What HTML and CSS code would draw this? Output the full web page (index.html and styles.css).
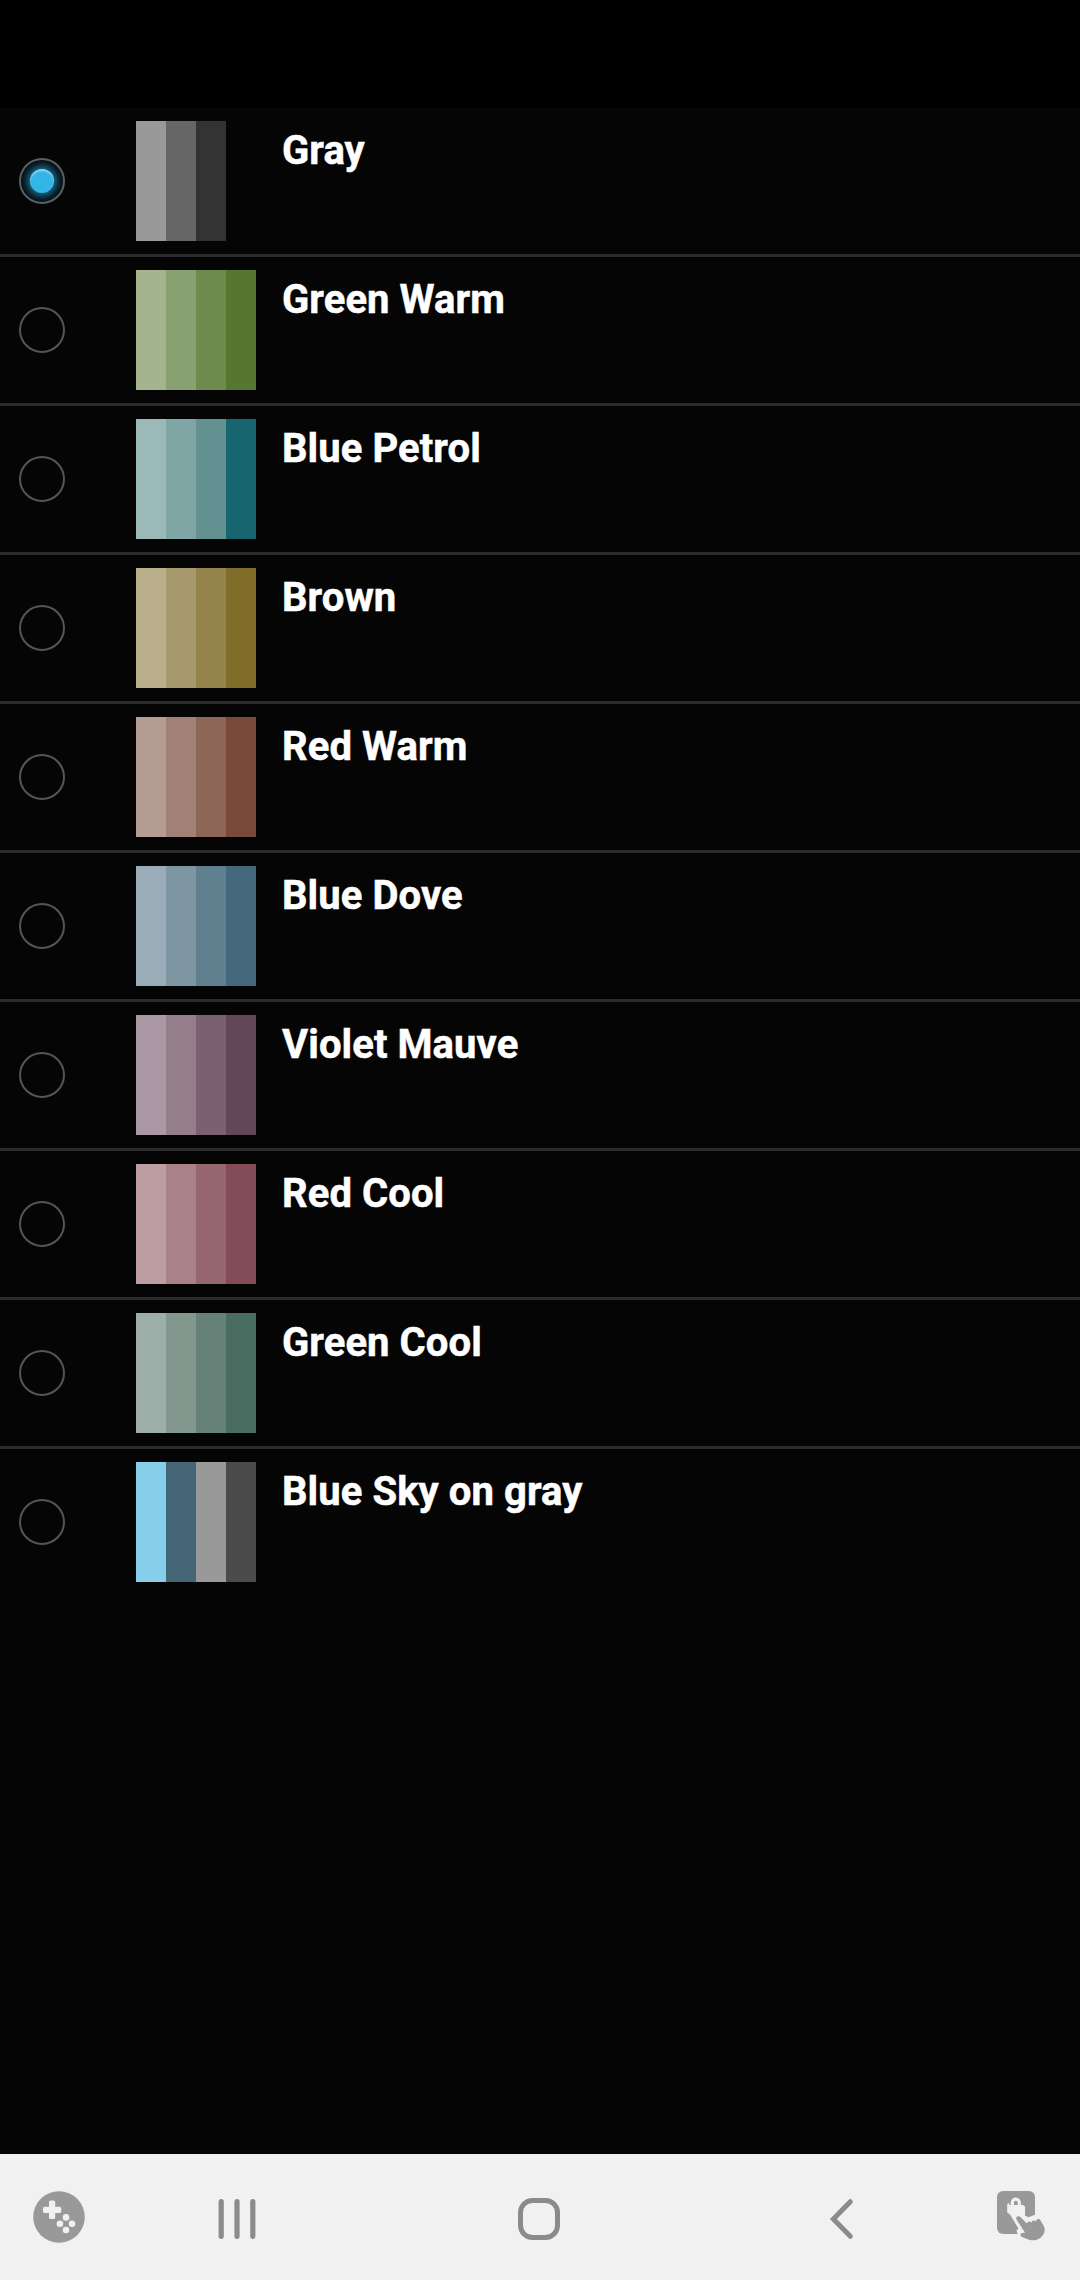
FILE: index.html
```
<!DOCTYPE html>
<html lang="en">
<head>
<meta charset="utf-8">
<title>Color theme</title>
<link rel="stylesheet" href="styles.css">
</head>
<body>
<div class="screen">
  <div class="status-bar"></div>
  <main class="theme-list">
    <div class="row"><span class="radio checked"></span><div class="swatch"><i style="background:#999999"></i><i style="background:#666666"></i><i style="background:#333333"></i></div><span class="name">Gray</span></div>
    <div class="row"><span class="radio"></span><div class="swatch"><i style="background:#a3b48f"></i><i style="background:#89a071"></i><i style="background:#6e8b4e"></i><i style="background:#557730"></i></div><span class="name">Green Warm</span></div>
    <div class="row"><span class="radio"></span><div class="swatch"><i style="background:#9bb9b8"></i><i style="background:#7fa5a4"></i><i style="background:#639191"></i><i style="background:#17656f"></i></div><span class="name">Blue Petrol</span></div>
    <div class="row"><span class="radio"></span><div class="swatch"><i style="background:#b9af8b"></i><i style="background:#a6996c"></i><i style="background:#94834a"></i><i style="background:#806d2a"></i></div><span class="name">Brown</span></div>
    <div class="row"><span class="radio"></span><div class="swatch"><i style="background:#b59c92"></i><i style="background:#a18176"></i><i style="background:#8c6557"></i><i style="background:#784a39"></i></div><span class="name">Red Warm</span></div>
    <div class="row"><span class="radio"></span><div class="swatch"><i style="background:#9aacb7"></i><i style="background:#7e95a2"></i><i style="background:#607f8f"></i><i style="background:#44697c"></i></div><span class="name">Blue Dove</span></div>
    <div class="row"><span class="radio"></span><div class="swatch"><i style="background:#aa99a5"></i><i style="background:#937e8a"></i><i style="background:#7b6070"></i><i style="background:#634658"></i></div><span class="name">Violet Mauve</span></div>
    <div class="row"><span class="radio"></span><div class="swatch"><i style="background:#bc9da2"></i><i style="background:#a98187"></i><i style="background:#96666f"></i><i style="background:#834c57"></i></div><span class="name">Red Cool</span></div>
    <div class="row"><span class="radio"></span><div class="swatch"><i style="background:#9caea7"></i><i style="background:#82988f"></i><i style="background:#668278"></i><i style="background:#496d60"></i></div><span class="name">Green Cool</span></div>
    <div class="row"><span class="radio"></span><div class="swatch"><i style="background:#87ceeb"></i><i style="background:#446677"></i><i style="background:#999999"></i><i style="background:#4b4b4b"></i></div><span class="name">Blue Sky on gray</span></div>
  </main>
  <nav class="nav-bar">
    <svg width="52" height="52" viewBox="33 37 52 52">
      <circle cx="59" cy="63" r="25.8" fill="#999"/>
      <g fill="#f1f1f1">
        <rect x="43" y="52.7" width="18.2" height="6.2" rx="1.6"/>
        <rect x="49" y="46.6" width="6.2" height="18.4" rx="1.6"/>
        <circle cx="66" cy="63.4" r="3.3"/><circle cx="59.9" cy="69.7" r="3.3"/>
        <circle cx="72" cy="69.7" r="3.3"/><circle cx="66" cy="76" r="3.3"/>
      </g>
    </svg>
    <svg width="38" height="52" viewBox="218 37 38 52" stroke="#8b8b8b" stroke-width="5.2" stroke-linecap="round">
      <path d="M221.2 47.7v34.6M237 47.7v34.6M252.8 47.7v34.6"/>
    </svg>
    <svg width="42" height="52" viewBox="518 37 42 52" fill="none" stroke="#8b8b8b" stroke-width="5">
      <rect x="520.5" y="46.5" width="37" height="37" rx="12"/>
    </svg>
    <svg width="26" height="52" viewBox="829 37 26 52" fill="none" stroke="#8b8b8b" stroke-width="5" stroke-linecap="round">
      <path d="M850.3 47.7 833.4 65l16.9 17.3"/>
    </svg>
    <svg width="50" height="54" viewBox="996 36 50 54">
      <rect x="997" y="37" width="38" height="43" rx="6" fill="#999"/>
      <path d="M1012.300 53v-4.300a3.500 3.500 0 0 1 7 0V53" fill="none" stroke="#f1f1f1" stroke-width="3.200"/>
      <path d="M1009.200 51h13.300q2.500 0 2.500 2.500v8l3.500 1.800 7-2.800h3v23h-22l1-4-1-3 2-2-8.500-14-2.800-2v-8q0-1.500 2-1.500z" fill="#f1f1f1"/>
      <path d="M1016.300 65.200c-.8-2.600 2.500-4 4.300-1.900l6 6 .9-.9c1.400-1.400 3-.9 4.100.4.200-2.500 2.900-2.900 4.400-1.100 0-3 3.500-3.500 4.500-1.200l3.500 6c2.500 5.500-2 12-8 13.400-3.500.8-6 .2-9-1l-5.500-2.200c-1.600-.8-1.200-3.400.8-3.600l2.800-.3z" fill="#999"/>
    </svg>
  </nav>
</div>
</body>
</html>
```
FILE: styles.css
```
body {
  margin: 0;
  background: #000;
  font-family: Roboto, "Liberation Sans", sans-serif;
}

.screen {
  display: flex;
  flex-direction: column;
  height: 2280px;
}

.status-bar {
  height: 108px;
  background: #000;
}

.theme-list {
  flex: 1;
  background: #050505;
}

.row {
  display: grid;
  grid-template-columns: 117px 146px 1fr;
  height: 120px;
  padding: 13px 0 13px 19px;
}

.row + .row {
  border-top: 3px solid #2b2b2b;
}

.radio {
  box-sizing: border-box;
  width: 46px;
  height: 46px;
  align-self: center;
  border: 2px solid #555;
  border-radius: 50%;
}

.radio.checked {
  display: grid;
  place-items: center;
  border-color: #5c5f61;
  background: radial-gradient(circle closest-side, #1b6c8c 50%, #12475c 66%, #09222d 84%, #060d11 100%);
}

.radio.checked::before {
  content: "";
  width: 24px;
  height: 24px;
  border-radius: 50%;
  background: #33b5e5;
  box-shadow: inset 0 2px 2px #8bd5f0;
}

.swatch {
  display: flex;
}

.swatch i {
  width: 30px;
}

.name {
  padding-top: 6px;
  font-size: 40px;
  line-height: 48px;
  font-weight: 700;
  letter-spacing: 0.08px;
  -webkit-text-stroke: 0.5px #fff;
  color: #fff;
}

.nav-bar {
  display: grid;
  grid-template-columns: 118px 238px 366px 240px 118px;
  place-items: center;
  height: 126px;
  background: #f1f1f1;
}
```
